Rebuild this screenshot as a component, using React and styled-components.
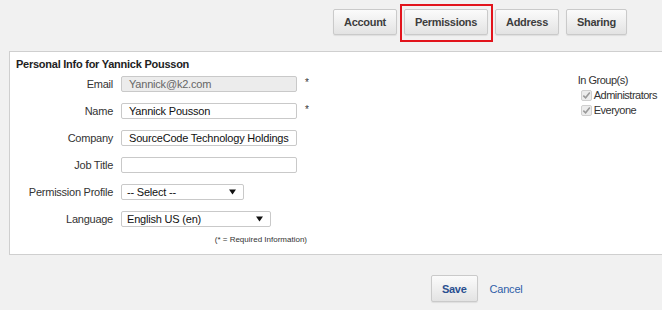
import React from "react";
import styled, { createGlobalStyle } from "styled-components";

const Global = createGlobalStyle`
  html, body { margin: 0; padding: 0; }
  body {
    background: #f1f1f1;
    font-family: Arial, "Liberation Sans", sans-serif;
    font-size: 11px;
    color: #333;
    width: 662px;
    height: 310px;
    overflow: hidden;
  }
  * { box-sizing: border-box; }
`;

const Page = styled.div`
  display: flex;
  flex-direction: column;
  width: 662px;
`;

const TabBar = styled.div`
  display: flex;
  justify-content: flex-end;
  gap: 7px;
  padding: 9px 35px 0 0;
`;

const Button = styled.button`
  position: relative;
  width: ${(p) => (p.$w ? `${p.$w}px` : "auto")};
  height: ${(p) => p.$h || 26}px;
  padding: 0 ${(p) => p.$px || 0}px;
  border: 1px solid #cacaca;
  border-radius: 2px;
  background: linear-gradient(#fbfbfb, #e3e3e3);
  box-shadow: 0 1px 1px rgba(0, 0, 0, 0.08);
  font-family: Arial, "Liberation Sans", sans-serif;
  font-weight: bold;
  font-size: 11px;
  letter-spacing: -0.3px;
  color: ${(p) => p.$color || "#3d3d3d"};
  cursor: pointer;

  ${(p) =>
    p.$highlight &&
    `
    &::after {
      content: "";
      position: absolute;
      top: -6px;
      left: -5px;
      right: -6px;
      bottom: -8px;
      border: 2px solid #e2141c;
    }
  `}
`;

const Panel = styled.section`
  margin: 16px 0 0 9px;
  background: #fff;
  border: 1px solid #cfcfcf;
  border-right: none;
  padding: 5px 0 9px 6px;
  display: flex;
  flex-direction: column;
`;

const Title = styled.h2`
  margin: 0;
  font-size: 11px;
  line-height: 14px;
  font-weight: bold;
  color: #222;
  letter-spacing: -0.25px;
`;

const Body = styled.div`
  display: flex;
  align-items: flex-start;
`;

const Form = styled.div`
  display: grid;
  grid-template-columns: 97px auto auto;
  column-gap: 8px;
  row-gap: 11px;
  align-items: center;
  padding-top: 5px;
`;

const Label = styled.label`
  text-align: right;
  color: #333;
  font-size: 11px;
  letter-spacing: -0.25px;
  white-space: nowrap;
`;

const Input = styled.div`
  width: ${(p) => p.$w || 176}px;
  height: 16px;
  border: 1px solid #c9c9c9;
  border-radius: 2px;
  background: ${(p) => (p.$disabled ? "#ececec" : "#fff")};
  color: ${(p) => (p.$disabled ? "#666" : "#111")};
  padding: 0 0 0 7px;
  display: flex;
  align-items: center;
  font-size: 11px;
  letter-spacing: -0.2px;
  white-space: nowrap;
  overflow: hidden;
`;

const Select = styled.div`
  width: ${(p) => p.$w}px;
  height: 16px;
  border: 1px solid #c9c9c9;
  border-radius: 2px;
  background: #fff;
  color: #111;
  padding: 0 7px 0 5px;
  display: flex;
  align-items: center;
  justify-content: space-between;
  font-size: 11px;
  letter-spacing: -0.2px;
  white-space: nowrap;
`;

const Req = styled.span`
  color: #333;
  font-size: 10px;
  align-self: start;
  margin-top: 1px;
`;

const Note = styled.div`
  grid-column: 2 / span 2;
  margin-top: -3px;
  width: 186px;
  text-align: right;
  font-size: 8px;
  line-height: 10px;
  color: #333;
`;

const Aside = styled.div`
  margin-left: auto;
  margin-top: 2px;
  padding-right: 5px;
  display: flex;
  flex-direction: column;
  font-size: 11px;
  line-height: 15px;
  color: #333;
  letter-spacing: -0.5px;
`;

const Check = styled.div`
  display: flex;
  align-items: center;
  gap: 2px;
  padding-left: 3px;
`;

const Box = styled.span`
  width: 11px;
  height: 11px;
  border: 1px solid #cfcfcf;
  border-radius: 2px;
  background: #ececec;
  display: inline-flex;
  align-items: center;
  justify-content: center;
`;

const Footer = styled.div`
  display: flex;
  align-items: center;
  gap: 12px;
  padding: 20px 0 0 431px;
`;

const LinkBtn = styled.a`
  color: #2f5ea8;
  font-size: 11px;
  letter-spacing: -0.2px;
  text-decoration: none;
  cursor: pointer;
`;

const Arrow = () => (
  <svg width="7" height="6" viewBox="0 0 7 6">
    <path d="M0 0.5 H7 L3.5 5.5 Z" fill="#111" />
  </svg>
);

const Tick = () => (
  <svg width="9" height="9" viewBox="0 0 9 9">
    <path d="M1.3 4.6 L3.6 6.8 L7.8 1.6" stroke="#9a9a9a" strokeWidth="1.6" fill="none" />
  </svg>
);

export default function App() {
  return (
    <Page>
      <Global />
      <TabBar>
        <Button $w={64}>Account</Button>
        <Button $w={84} $highlight>Permissions</Button>
        <Button $w={64}>Address</Button>
        <Button $w={61}>Sharing</Button>
      </TabBar>
      <Panel>
        <Title>Personal Info for Yannick Pousson</Title>
        <Body>
          <Form>
            <Label>Email</Label>
            <Input $disabled>Yannick@k2.com</Input>
            <Req>*</Req>

            <Label>Name</Label>
            <Input>Yannick Pousson</Input>
            <Req>*</Req>

            <Label>Company</Label>
            <Input>SourceCode Technology Holdings</Input>
            <span />

            <Label>Job Title</Label>
            <Input />
            <span />

            <Label>Permission Profile</Label>
            <Select $w={123}>
              <span>-- Select --</span>
              <Arrow />
            </Select>
            <span />

            <Label>Language</Label>
            <Select $w={150}>
              <span>English US (en)</span>
              <Arrow />
            </Select>
            <span />

            <span />
            <Note>(* = Required Information)</Note>
          </Form>
          <Aside>
            <span>In Group(s)</span>
            <Check>
              <Box><Tick /></Box>
              <span>Administrators</span>
            </Check>
            <Check>
              <Box><Tick /></Box>
              <span>Everyone</span>
            </Check>
          </Aside>
        </Body>
      </Panel>
      <Footer>
        <Button $h={27} $px={10} $color="#2a4f90">Save</Button>
        <LinkBtn>Cancel</LinkBtn>
      </Footer>
    </Page>
  );
}
